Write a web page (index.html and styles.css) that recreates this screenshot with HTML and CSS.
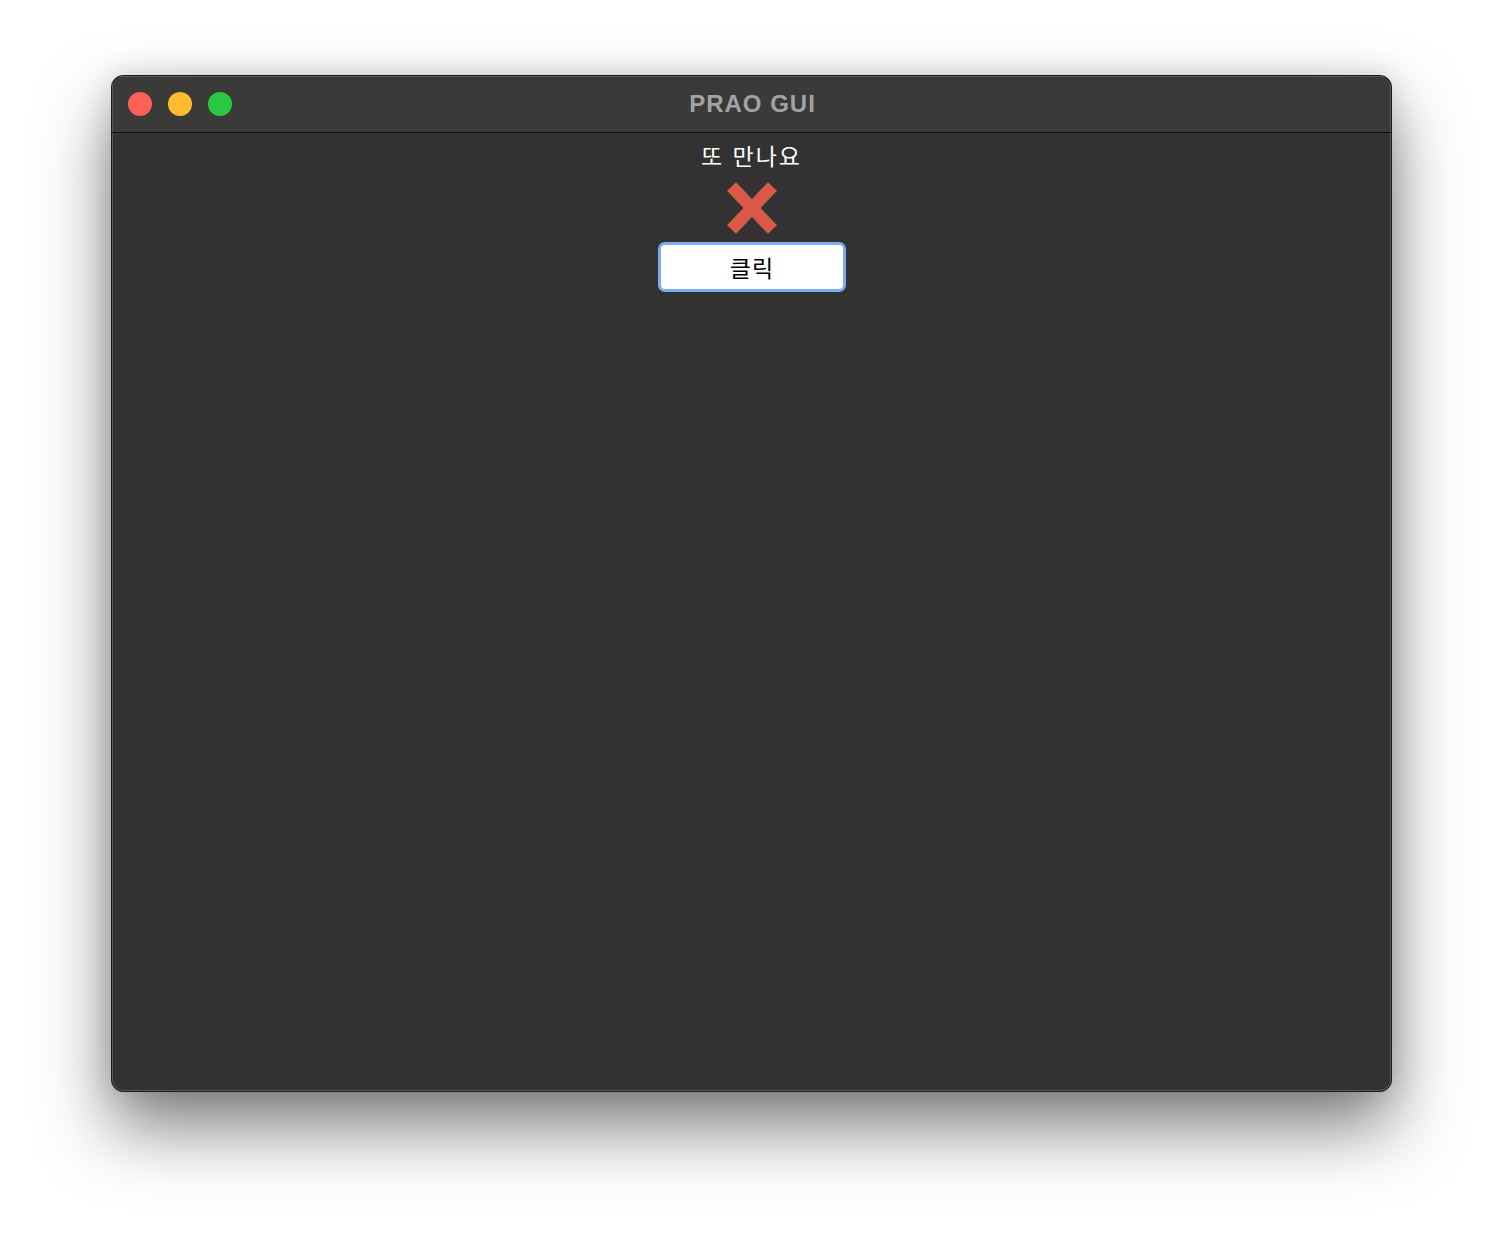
FILE: index.html
```html
<!DOCTYPE html>
<html lang="ko">
<head>
<meta charset="utf-8">
<title>PRAO GUI</title>
<link rel="stylesheet" href="styles.css">
</head>
<body>
<div class="window">
  <div class="titlebar">
    <div class="lights">
      <span class="light red"></span>
      <span class="light yellow"></span>
      <span class="light green"></span>
    </div>
    <div class="title">PRAO GUI</div>
  </div>
  <div class="content">
    <div class="label">또 만나요</div>
    <svg class="cross" width="52" height="54" viewBox="0 0 52 54" aria-label="❌">
      <path d="M5.5 5.5 L46.5 48.5 M46.5 5.5 L5.5 48.5" stroke="#dc5846" stroke-width="12.5" stroke-linecap="butt"/>
    </svg>
    <button class="btn">클릭</button>
  </div>
</div>
</body>
</html>
```
FILE: styles.css
```css
html, body {
  margin: 0;
  padding: 0;
  background: #ffffff;
}
body {
  width: 1504px;
  height: 1240px;
  padding-top: 75px;
  padding-left: 111px;
  box-sizing: border-box;
  font-family: "Noto Sans CJK KR", "Noto Sans", sans-serif;
}
.window {
  width: 1281px;
  height: 1017px;
  box-sizing: border-box;
  border: 1px solid #1a1a1a;
  border-radius: 12px;
  background: #323232;
  box-shadow: inset 0 0 0 1px #5a5a5a, 0 36px 70px rgba(0,0,0,0.5), 0 0 30px rgba(0,0,0,0.14);
  overflow: hidden;
  display: flex;
  flex-direction: column;
}
.titlebar {
  height: 57px;
  flex: none;
  background: #3a3a38;
  border-bottom: 1px solid #0e0e0e;
  box-sizing: border-box;
  display: flex;
  align-items: center;
  position: relative;
  box-shadow: inset 0 1px 0 #5a5a5a, inset 1px 0 0 #5a5a5a, inset -1px 0 0 #5a5a5a;
}
.lights {
  display: flex;
  gap: 16px;
  padding-left: 16px;
}
.light {
  width: 24px;
  height: 24px;
  border-radius: 50%;
  display: block;
}
.red { background: #fe5f57; }
.yellow { background: #febc2e; }
.green { background: #28c840; }
.title {
  position: absolute;
  left: 0;
  right: 0;
  top: 0;
  bottom: 0;
  display: flex;
  align-items: center;
  justify-content: center;
  font-family: "Liberation Sans", Arial, sans-serif;
  font-weight: 700;
  font-size: 24px;
  letter-spacing: 1px;
  color: #a3a3a3;
  padding-left: 2px;
}
.content {
  flex: 1;
  display: flex;
  flex-direction: column;
  align-items: center;
  padding-top: 7px;
}
.label {
  color: #ffffff;
  font-size: 23px;
  letter-spacing: 2px;
  line-height: 30px;
  height: 30px;
}
.cross {
  display: block;
  margin-top: 11px;
}
.btn {
  margin-top: 7px;
  width: 188px;
  height: 50px;
  box-sizing: border-box;
  border: 3px solid #7aaef3;
  border-radius: 7px;
  background: #ffffff;
  color: #000000;
  font-family: "Noto Sans CJK KR", "Noto Sans", sans-serif;
  font-size: 23px;
  letter-spacing: 1px;
  line-height: 1;
  padding: 0 0 0 1px;
}
```
